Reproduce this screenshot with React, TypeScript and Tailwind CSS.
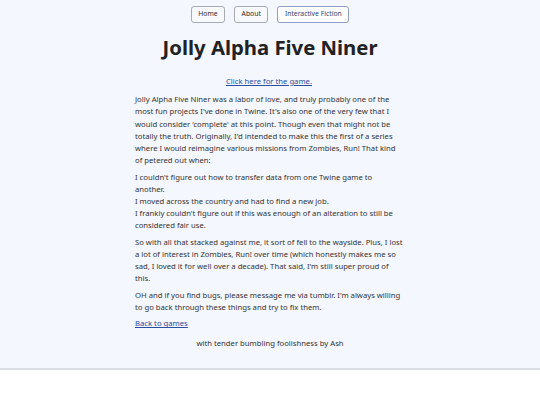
const navItems = [
  { label: "Home", active: false },
  { label: "About", active: false },
  { label: "Interactive Fiction", active: true },
];

export default function App() {
  return (
    <div className="min-h-[405px] bg-white font-['Noto_Sans',sans-serif]">
      <div className="bg-[#f4f7fe] border-b-2 border-[#dcdde4] pb-[19px]">
        <nav className="flex justify-center gap-[9px] pt-[6px]">
          {navItems.map((item) => (
            <a
              key={item.label}
              href="#"
              className={`h-[17px] px-[6.5px] flex items-center rounded-[3px] border text-[6.8px] leading-none ${
                item.active
                  ? "border-[#8e9ec4] bg-white text-[#2d4479]"
                  : "border-[#a9abb4] bg-[#f8f9fc] text-[#2b2b2b]"
              }`}
            >
              {item.label}
            </a>
          ))}
        </nav>

        <h1 className="mt-[10px] text-center text-[20.3px] font-bold leading-[28px] text-[#222222]">
          Jolly Alpha Five Niner
        </h1>

        <div className="mx-auto w-[270px] pr-[2px] text-[7.7px] leading-[12.2px] text-[#333333]">
          <p className="mt-[14px] text-center">
            <a href="#" className="text-[#2a4d9e] underline">
              Click here for the game.
            </a>
          </p>
          <p className="mt-[6px]">
            Jolly Alpha Five Niner was a labor of love, and truly probably one of the most fun
            projects I've done in Twine. It's also one of the very few that I would consider
            'complete' at this point. Though even that might not be totally the truth.
            Originally, I'd intended to make this the first of a series where I would reimagine
            various missions from Zombies, Run! That kind of petered out when:
          </p>
          <p className="mt-[4.2px]">
            I couldn't figure out how to transfer data from one Twine game to another.
            <br />
            I moved across the country and had to find a new job.
            <br />
            I frankly couldn't figure out if this was enough of an alteration to still be
            considered fair use.
          </p>
          <p className="mt-[4.2px]">
            So with all that stacked against me, it sort of fell to the wayside. Plus, I lost a
            lot of interest in Zombies, Run! over time (which honestly makes me so sad, I loved
            it for well over a decade). That said, I'm still super proud of this.
          </p>
          <p className="mt-[4.2px]">
            OH and if you find bugs, please message me via tumblr. I'm always willing to go back
            through these things and try to fix them.
          </p>
          <p className="mt-[4.2px]">
            <a href="#" className="text-[#2a4d9e] underline">
              Back to games
            </a>
          </p>
        </div>

        <footer className="mt-[7px] text-center text-[7.7px] leading-[12.2px] text-[#333333]">
          with tender bumbling foolishness by Ash
        </footer>
      </div>
    </div>
  );
}
